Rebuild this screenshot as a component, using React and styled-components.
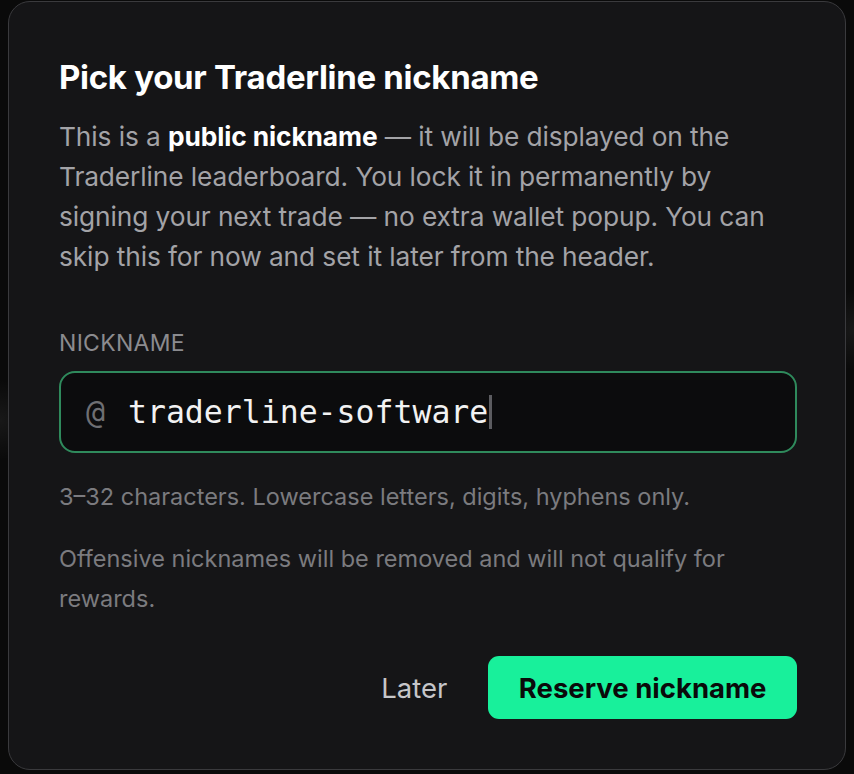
import React from "react"
import styled, { createGlobalStyle } from "styled-components"

const GlobalStyle = createGlobalStyle`
  html, body {
    margin: 0;
    padding: 0;
    background: #0a0a0a;
  }
  body {
    font-family: Inter, "Noto Sans", sans-serif;
    -webkit-font-smoothing: antialiased;
  }
`

const Page = styled.div`
  min-height: 774px;
  box-sizing: border-box;
  padding: 1px 8px 4px;
  background:
    radial-gradient(circle at 0 420px, rgba(255, 255, 255, 0.06), transparent 40px),
    radial-gradient(circle at 854px 330px, rgba(255, 255, 255, 0.06), transparent 40px),
    #0a0a0a;
`

const Modal = styled.div`
  box-sizing: border-box;
  width: 838px;
  height: 769px;
  padding: 55px 48px 50px 50px;
  background: #151517;
  border: 1px solid #3a3a3d;
  border-radius: 22px;
  display: flex;
  flex-direction: column;
`

const Title = styled.h2`
  margin: 0;
  font-size: 33px;
  line-height: 40px;
  font-weight: 700;
  letter-spacing: -0.3px;
  color: #ffffff;
`

const Description = styled.p`
  margin: 20px 0 0;
  font-size: 26.3px;
  line-height: 40px;
  letter-spacing: -0.1px;
  color: #a3a3a7;

  strong {
    color: #ffffff;
    font-weight: 700;
  }
`

const Label = styled.label`
  margin-top: 52px;
  font-size: 23px;
  line-height: 28px;
  letter-spacing: 0.3px;
  color: #8b8b8f;
`

const Field = styled.div`
  margin-top: 14px;
  box-sizing: border-box;
  height: 82px;
  display: flex;
  align-items: center;
  padding: 0 25px;
  background: #0c0c0d;
  border: 2px solid #2f8a5c;
  border-radius: 16px;
  font-family: "DejaVu Sans Mono", "Liberation Mono", monospace;
  font-size: 31.5px;
`

const At = styled.span`
  color: #6f6f73;
`

const Value = styled.span`
  color: #f2f2f2;
  margin-left: 23px;
`

const Caret = styled.span`
  width: 3px;
  height: 34px;
  margin-left: 1px;
  background: #5c5c60;
`

const Hint = styled.p`
  margin: ${(p) => p.$top}px 0 0;
  font-size: 23.5px;
  line-height: 40px;
  color: #7b7b7f;
`

const Actions = styled.div`
  margin-top: auto;
  display: flex;
  justify-content: flex-end;
  align-items: center;
  gap: 25px;
`

const LaterButton = styled.button`
  background: none;
  border: none;
  padding: 0 16px;
  font-family: inherit;
  font-size: 27.5px;
  color: #c6c6c9;
  cursor: pointer;
`

const ReserveButton = styled.button`
  height: 63px;
  padding: 0 30.5px;
  background: #18f09b;
  border: none;
  border-radius: 11px;
  font-family: inherit;
  font-size: 27.5px;
  font-weight: 700;
  color: #0a0a0a;
  cursor: pointer;
`

const App = () => (
  <Page>
    <GlobalStyle />
    <Modal>
      <Title>Pick your Traderline nickname</Title>
      <Description>
        This is a <strong>public nickname</strong> — it will be displayed on the
        Traderline leaderboard. You lock it in permanently by signing your next
        trade — no extra wallet popup. You can skip this for now and set it later
        from the header.
      </Description>
      <Label>NICKNAME</Label>
      <Field>
        <At>@</At>
        <Value>traderline-software</Value>
        <Caret />
      </Field>
      <Hint $top={24}>3–32 characters. Lowercase letters, digits, hyphens only.</Hint>
      <Hint $top={22}>
        Offensive nicknames will be removed and will not qualify for rewards.
      </Hint>
      <Actions>
        <LaterButton>Later</LaterButton>
        <ReserveButton>Reserve nickname</ReserveButton>
      </Actions>
    </Modal>
  </Page>
)

export default App
